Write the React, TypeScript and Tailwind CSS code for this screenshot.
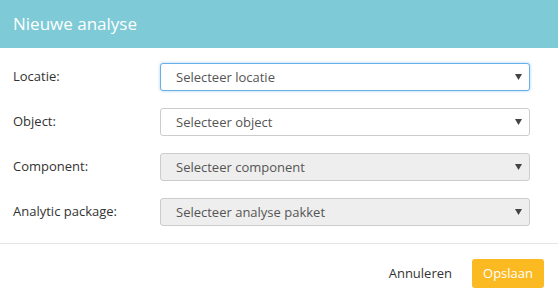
const rows = [
  { label: "Locatie:", placeholder: "Selecteer locatie", focus: true, disabled: false },
  { label: "Object:", placeholder: "Selecteer object", focus: false, disabled: false },
  { label: "Component:", placeholder: "Selecteer component", focus: false, disabled: true },
  { label: "Analytic package:", placeholder: "Selecteer analyse pakket", focus: false, disabled: true },
];

const Caret = () => (
  <svg width="7" height="6" viewBox="0 0 7 6" className="absolute right-[7px] top-[10px]">
    <path d="M0 0 H7 L3.5 6 Z" fill="#444" />
  </svg>
);

export default function App() {
  return (
    <div className="h-[301px] w-[558px] overflow-hidden bg-white font-['Open_Sans',sans-serif]">
      <div className="flex h-[48px] items-center bg-[#7ecad6] px-[13px] text-[17px] text-white">
        Nieuwe analyse
      </div>
      <div className="flex flex-col gap-[17px] pt-[15px] pb-[17px]">
        {rows.map((r) => (
          <div key={r.label} className="flex items-center">
            <p className="w-[160px] pl-[13px] text-[13px] text-[#333]">{r.label}</p>
            <div
              className={
                r.focus
                  ? "relative flex h-[28px] w-[370px] items-center rounded-[3px] border border-[#66afe9] bg-white pl-[15px] pt-[2px] text-[13px] text-[#555] shadow-[0_0_3px_rgba(102,175,233,0.6)]"
                  : r.disabled
                  ? "relative flex h-[28px] w-[370px] items-center rounded-[3px] border border-[#ccc] bg-[#eee] pl-[15px] pt-[2px] text-[13px] text-[#555]"
                  : "relative flex h-[28px] w-[370px] items-center rounded-[3px] border border-[#ccc] bg-white pl-[15px] pt-[2px] text-[13px] text-[#555]"
              }
            >
              {r.placeholder}
              <Caret />
            </div>
          </div>
        ))}
      </div>
      <div className="border-t border-[#e5e5e5]" />
      <div className="flex items-center justify-end gap-[20px] pt-[15px] pr-[14px]">
        <button className="text-[13px] text-[#333]">Annuleren</button>
        <button className="h-[29px] w-[72px] rounded-[3px] bg-[#fbb922] text-[13px] text-white">
          Opslaan
        </button>
      </div>
    </div>
  );
}
